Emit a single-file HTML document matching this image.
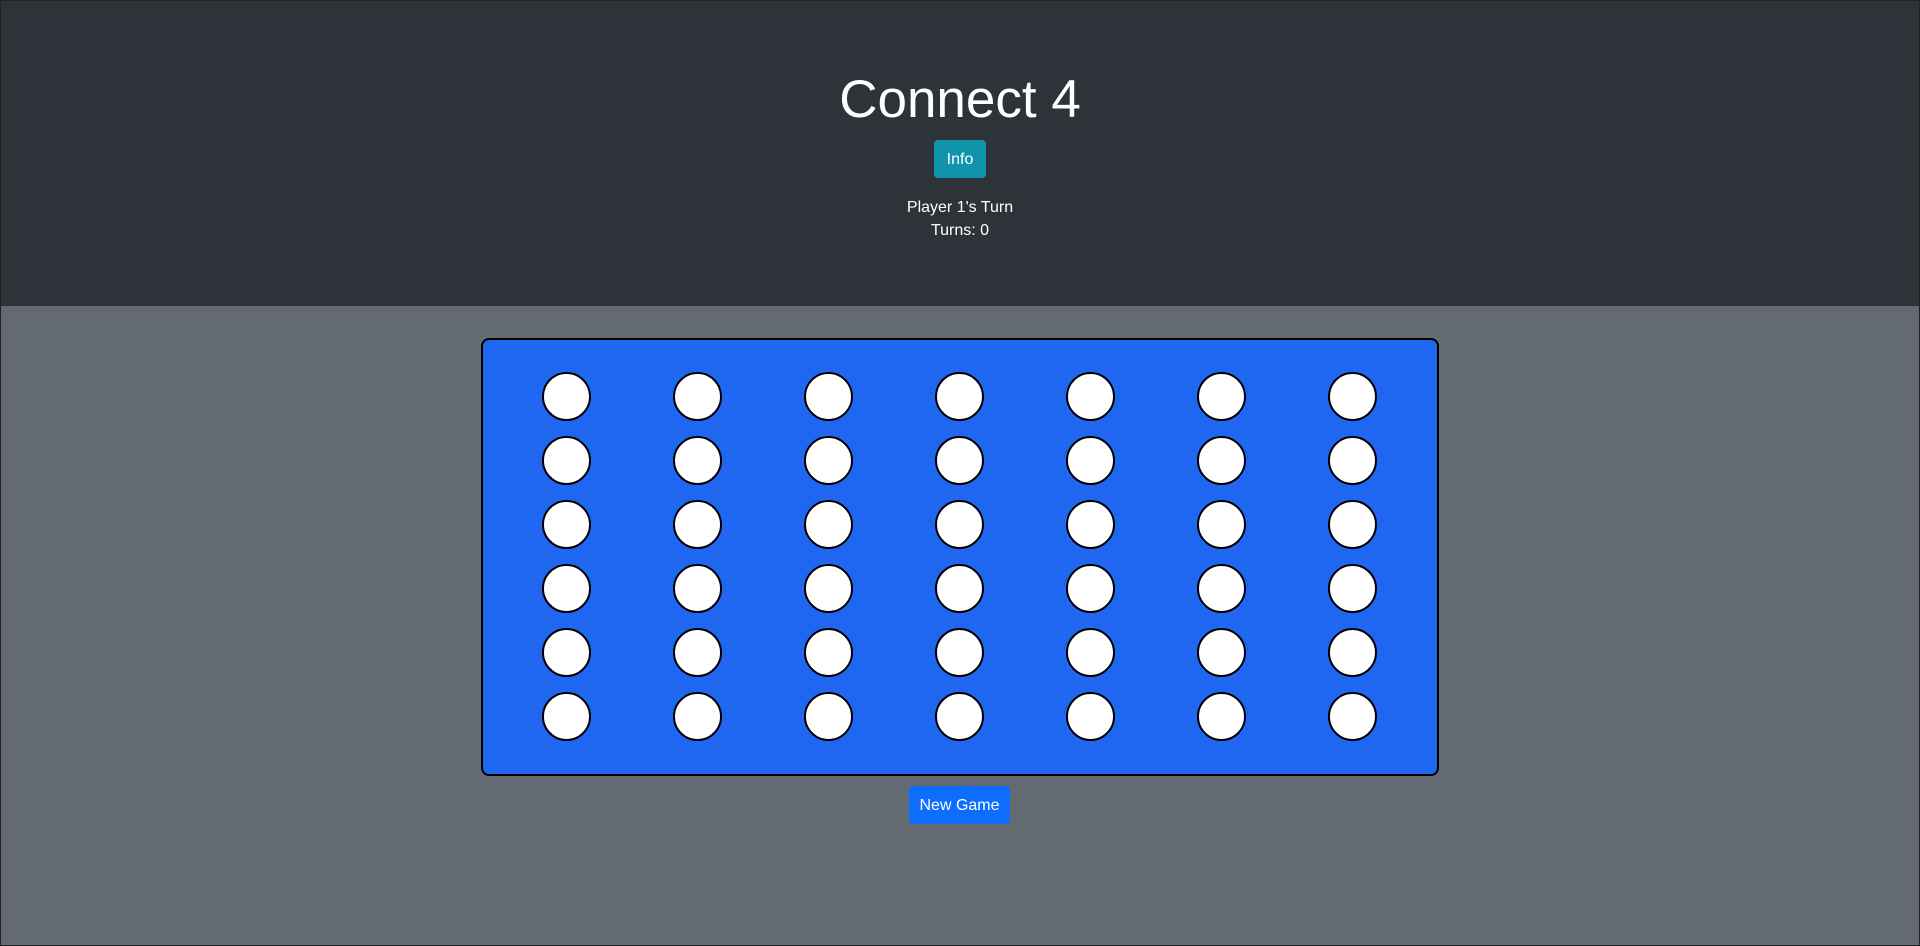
<!DOCTYPE html>
<html><head><style>
html,body{margin:0;padding:0;width:1920px;height:946px;overflow:hidden;font-family:"Liberation Sans",sans-serif;}
body{background:#646a71;position:relative;}
.hdr{position:absolute;left:0;top:0;width:1920px;height:306px;background:#2e3239;color:#fff;text-align:center;}
h1{position:absolute;left:0;width:100%;top:66px;margin:0;font-size:53px;font-weight:300;line-height:68px;}
.info{position:absolute;left:934px;top:140px;width:52px;height:38px;background:#0f94ac;border-radius:4px;color:#fff;font-size:16px;line-height:40px;text-align:center;}
.t{position:absolute;left:0;width:100%;font-size:16px;line-height:22px;}
.board{position:absolute;left:481px;top:338px;width:954px;height:434px;background:#1f66f0;border:2px solid #000;border-radius:8px;}
.c{position:absolute;width:45px;height:45px;border:2px solid #000;border-radius:50%;background:#fff;}
.ng{position:absolute;left:909px;top:786px;width:101px;height:38px;background:#0d6efd;border-radius:4px;color:#fff;font-size:16px;line-height:40px;text-align:center;}
.frame{position:absolute;left:0;top:0;width:1918px;height:944px;border:1px solid #222;}
</style></head><body>
<div class="hdr">
<h1>Connect 4</h1>
<div class="info">Info</div>
<div class="t" style="top:197px">Player 1's Turn</div>
<div class="t" style="top:220px">Turns: 0</div>
</div>
<div class="board" id="b"></div>
<div class="ng">New Game</div>
<div class="frame"></div>
<script>
var b=document.getElementById('b');
for(var r=0;r<6;r++)for(var c=0;c<7;c++){var d=document.createElement('div');d.className='c';d.style.left=(542-483+c*131)+'px';d.style.top=(372-340+r*64)+'px';b.appendChild(d);}
</script>
</body></html>
